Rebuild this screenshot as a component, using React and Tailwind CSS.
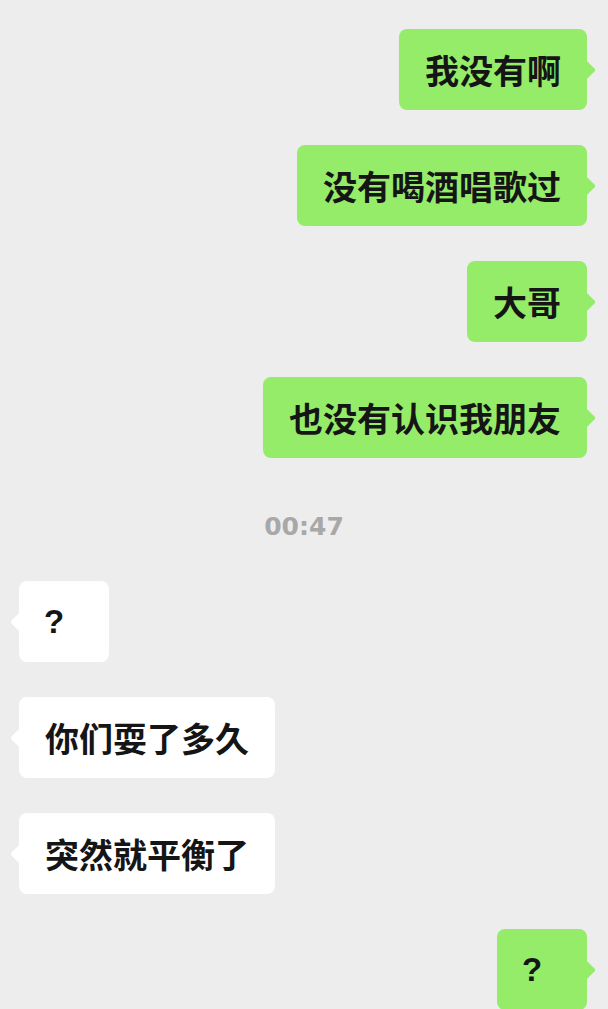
import React from 'react';

const messages = [
    { side: 'right', text: '我没有啊' },
    { side: 'right', text: '没有喝酒唱歌过' },
    { side: 'right', text: '大哥' },
    { side: 'right', text: '也没有认识我朋友' },
    { type: 'time', text: '00:47' },
    { side: 'left', text: '?' },
    { side: 'left', text: '你们耍了多久' },
    { side: 'left', text: '突然就平衡了' },
    { side: 'right', text: '?' },
];

const Bubble = ({ side, text }) => {
    const mine = side === 'right';
    const lone = text === '?';
    return (
        <div className={`flex w-full ${mine ? 'justify-end pr-[21px]' : 'justify-start pl-[19px]'} mb-[35px]`}>
            <div
                className={`relative flex items-center h-[81px] min-w-[90px] px-[26px] rounded-[8px] text-[#151515] leading-none ${lone ? 'text-[33px] font-bold pl-[25px]' : 'text-[34px] font-semibold'} ${mine ? 'bg-[#95ec69]' : 'bg-white'}`}
                style={lone ? { fontFamily: '"Liberation Sans", Arial, sans-serif' } : undefined}
            >
                <span
                    className={`absolute top-1/2 -mt-[7px] w-[14px] h-[14px] rotate-45 rounded-[2px] ${mine ? '-right-[6px] bg-[#95ec69]' : '-left-[6px] bg-white'}`}
                />
                <span className="relative">{text}</span>
            </div>
        </div>
    );
};

export default function App() {
    return (
        <div
            className="w-[608px] h-[1009px] overflow-hidden bg-[#ededed] pt-[29px] flex flex-col"
            style={{ fontFamily: '"Noto Sans CJK SC", "Noto Sans", sans-serif' }}
        >
            {messages.map((m, i) =>
                m.type === 'time' ? (
                    <div
                        key={i}
                        className="flex justify-center mt-[19px] mb-[39px] h-[30px] items-center text-[25px] font-bold text-[#a8a8a8]"
                        style={{ fontFamily: '"DejaVu Sans", sans-serif' }}
                    >
                        {m.text}
                    </div>
                ) : (
                    <Bubble key={i} side={m.side} text={m.text} />
                )
            )}
        </div>
    );
}
